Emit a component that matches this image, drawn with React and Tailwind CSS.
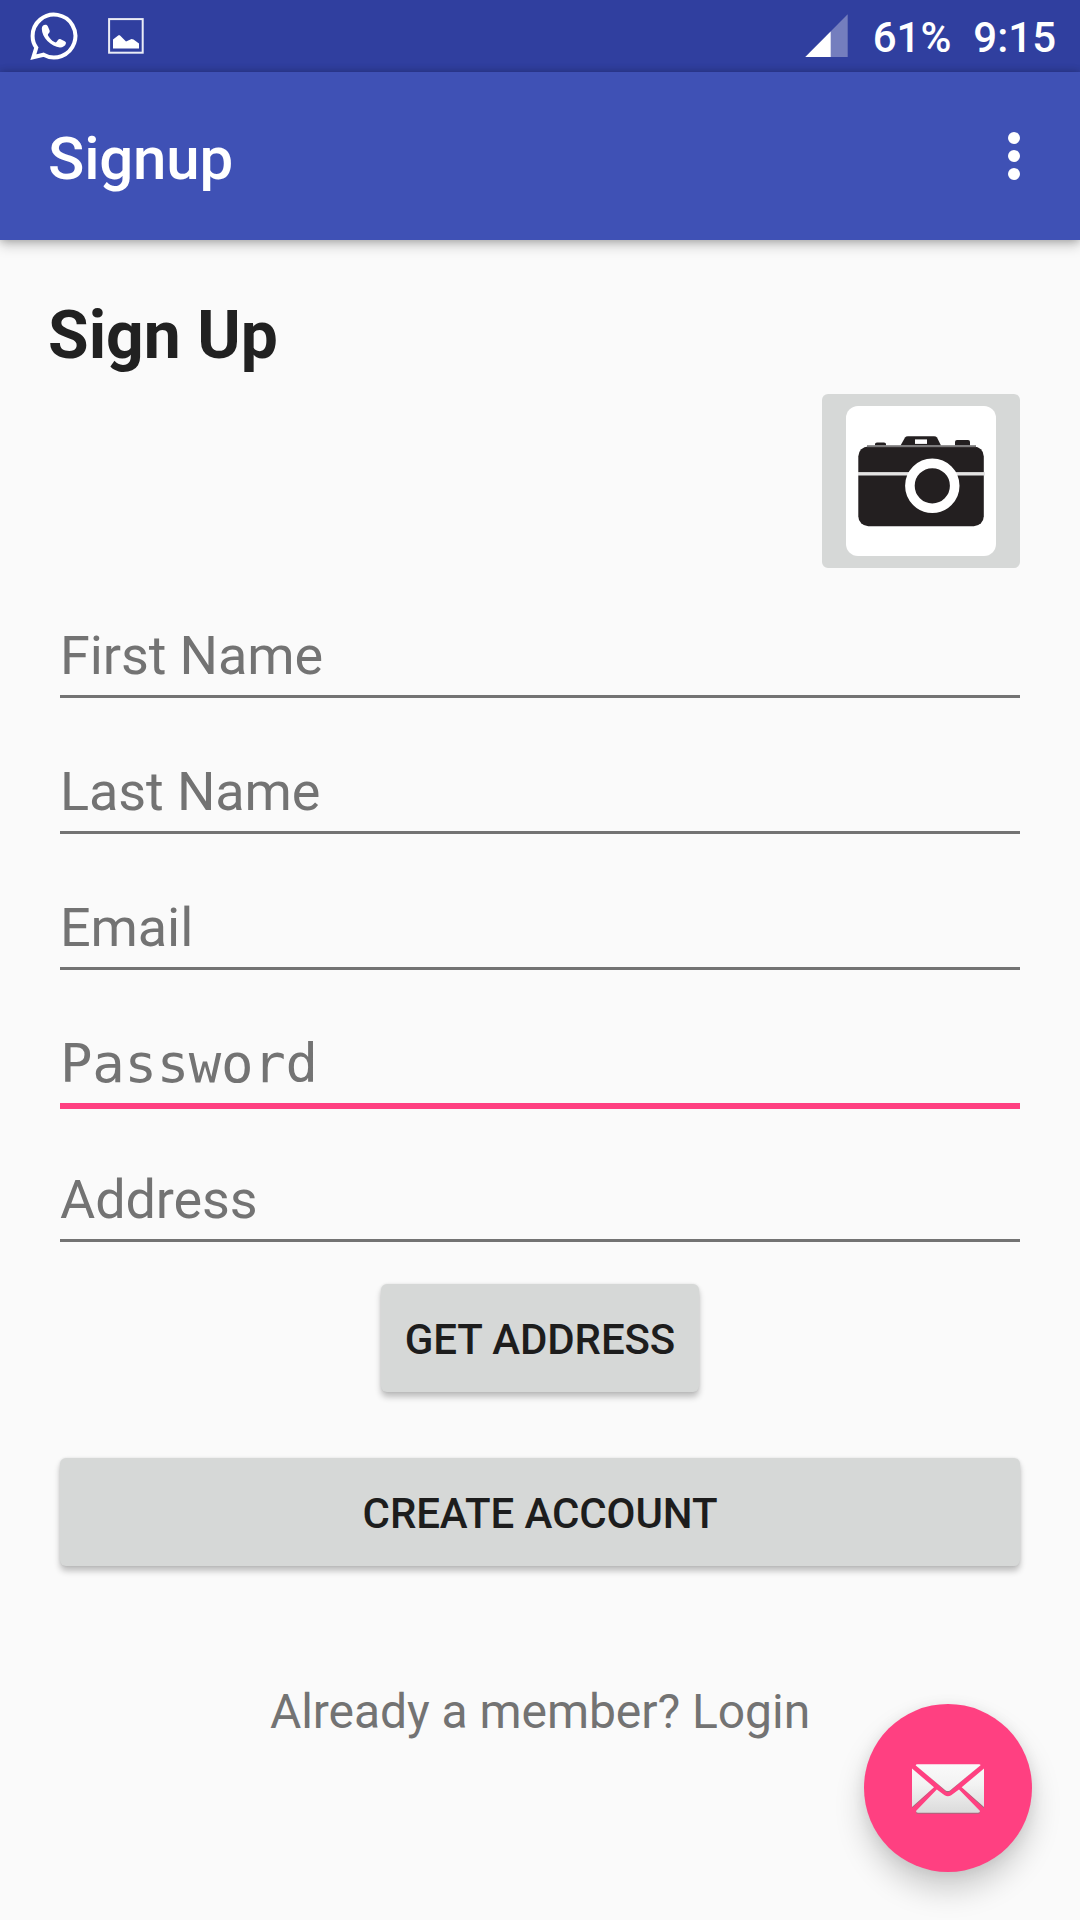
function WhatsAppIcon() {
  return (
    <svg className="h-[50px] w-[50px]" viewBox="0 0 50 50" fill="none">
      <path
        d="M4.3 46.3 L7.3 36.6 C4.9 33.4 3.6 29.4 3.6 25 A21.4 21.4 0 1 1 14.6 43.7 Z"
        stroke="#fff"
        strokeWidth="4"
      />
      <path
        d="M13.4 19 C13.4 16.6 15 15 17 15 C18.3 15 19 15.5 19.5 16.7 L21.1 20.5 C21.6 21.8 21.2 22.8 20.2 23.8 C19.3 24.7 19.3 25.2 19.9 26.2 C21.5 28.8 23.4 30.8 26.1 32.3 C27.1 32.9 27.6 32.8 28.3 31.9 L29.6 30.2 C30.4 29.2 31.2 29 32.3 29.5 L36.3 31.4 C37.4 31.9 37.7 32.5 37.5 33.7 C37 36.2 34.2 37.7 31.5 37.6 C27.3 37.4 22.8 35 19 31.2 C15.7 27.8 13.4 23.2 13.4 19 Z"
        fill="#fff"
        transform="translate(-.6 -1.2)"
      />
    </svg>
  );
}

function PictureIcon() {
  return (
    <svg className="h-9 w-9" viewBox="0 0 36 36" fill="none">
      <rect x="1.1" y="1.1" width="33.6" height="33.6" stroke="#fff" strokeOpacity=".9" strokeWidth="2" />
      <path d="M5 21.6 L10.5 17.3 L11.8 17.3 L18 23.4 L23.5 21 L25.5 21.5 L31 25.5 V30.6 H5 Z" fill="#fff" />
    </svg>
  );
}

function SignalIcon() {
  return (
    <svg className="h-[43px] w-[43px]" viewBox="0 0 43 43">
      <path d="M0.3 43 L42.7 0.3 V43 Z" fill="#fff" fillOpacity=".33" />
      <path d="M0.3 43 L25.7 17.5 V43 Z" fill="#fff" />
    </svg>
  );
}

function CameraIcon() {
  return (
    <svg className="h-[150px] w-[150px]" viewBox="0 0 150 150">
      <rect width="150" height="150" rx="12" fill="#fff" />
      <g transform="translate(0 .4)">
        <g fill="#231f20">
          <path d="M29 39 V37.5 Q29 36 31 36 H38 Q40 36 40 37.5 V39 Z" />
          <path d="M109 39 V35.5 Q109 33.5 111 33.5 H122 Q124 33.5 124 35.5 V39 Z" />
          <path d="M54.5 39 L59 31 Q60 29.8 62 29.8 H88 Q90 29.8 91 31 L95 39 Z" />
          <rect x="12.3" y="40" width="125.5" height="79.8" rx="10" />
        </g>
        <rect x="69" y="33" width="12" height="4.5" fill="#fff" />
        <rect x="21" y="38.8" width="109" height="2" fill="#7b797a" />
        <rect x="12" y="65.7" width="127" height="3.4" fill="#e4e3e3" />
        <circle cx="86.3" cy="79.4" r="22.4" fill="#231f20" stroke="#fff" strokeWidth="9.6" />
      </g>
    </svg>
  );
}

function MailIcon() {
  return (
    <svg className="h-[50px] w-[72px]" viewBox="0 0 72 50">
      <defs>
        <linearGradient id="paper" gradientUnits="userSpaceOnUse" x1="0" y1="0" x2="0" y2="50">
          <stop offset="0" stopColor="#fafafa" />
          <stop offset=".4" stopColor="#f3f3f3" />
          <stop offset="1" stopColor="#dadada" />
        </linearGradient>
      </defs>
      <g fill="#a3697b">
        <path d="M4.5 1.2 L33.5 27.2 Q35.8 29.2 38 27.2 L68 1.2 Z" />
        <path d="M4.5 47.5 Q3.5 49.8 6 49.8 H66 Q68.5 49.8 67.5 47.5 Z" />
        <path d="M0 42 L0 44 L22.5 23.8 Z" />
        <path d="M72 42 L72 44.2 L49.2 23.5 Z" />
      </g>
      <g fill="url(#paper)">
        <path d="M3.8 1.5 Q3.5 .2 5.5 .2 H67 Q69 .2 68.3 1.5 L38.3 26.2 Q35.8 28 33.3 26.2 Z" />
        <path d="M0 4.5 L22 23.3 L0 43 Z" />
        <path d="M72 4.5 L49.7 23.3 L72 43 Z" />
        <path d="M24.8 25.5 L32.6 31.2 Q35.8 33.3 39.2 31.2 L47 25.5 L68 47 Q68 48.7 66 48.7 H6 Q4 48.7 4 47 Z" />
      </g>
    </svg>
  );
}

function Field({ label, mono, focused }) {
  return (
    <div className="mt-6 flex h-28 flex-col px-3">
      <div
        className={
          mono
            ? "mt-[34px] h-[75px] shrink-0 font-['DejaVu_Sans_Mono',monospace] text-[54px] leading-[72px] tracking-[-0.3px] text-[#737373]"
            : "mt-[34px] h-[75px] shrink-0 text-[54px] leading-[71px] tracking-[-0.1px] text-[#737373]"
        }
      >
        {label}
      </div>
      <div className={focused ? "h-1.5 shrink-0 bg-[#ff4081]" : "h-[3px] shrink-0 bg-[#737373]"} />
    </div>
  );
}

const buttonClass =
  "flex h-[108px] items-center justify-center rounded-md bg-[#d6d8d7] pt-[4px] text-[42px] font-medium leading-[50px] tracking-[-0.1px] text-[#1d1d1d] shadow-[0_5px_6px_rgba(0,0,0,0.24),0_0_3px_rgba(0,0,0,0.1)]";

export default function App() {
  return (
    <div className="relative flex h-[1920px] w-[1080px] flex-col overflow-hidden bg-[#fafafa] font-['Roboto',sans-serif]">
      <div className="flex h-[72px] shrink-0 items-start justify-between bg-[#303f9f] pl-[29px] pr-6 text-white">
        <div className="flex pt-[11px]">
          <WhatsAppIcon />
          <div className="ml-[29px] pt-[7px]">
            <PictureIcon />
          </div>
        </div>
        <div className="flex items-start text-[42px] font-medium leading-[50px]">
          <div className="mr-[25px] pt-[14px]">
            <SignalIcon />
          </div>
          <span className="mr-[22px] mt-[13px]">61%</span>
          <span className="mt-[13px]">9:15</span>
        </div>
      </div>

      <header className="z-10 flex h-[168px] shrink-0 items-center justify-between bg-[#3f51b5] pl-12 pr-[60px] text-white shadow-[0_5px_12px_rgba(0,0,0,0.22),0_0_8px_rgba(0,0,0,0.22)]">
        <h1 className="pt-[5px] text-[60px] font-medium leading-[70px] tracking-[-0.2px]">Signup</h1>
        <div className="flex flex-col gap-1.5">
          <span className="h-3 w-3 rounded-full bg-white" />
          <span className="h-3 w-3 rounded-full bg-white" />
          <span className="h-3 w-3 rounded-full bg-white" />
        </div>
      </header>

      <main className="flex flex-col px-12 pt-[56px]">
        <h2 className="text-[66px] font-bold leading-[80px] text-[#212121]">Sign Up</h2>
        <div className="mr-3 mt-[18px] flex h-[174px] w-[198px] items-center justify-center self-end rounded-md bg-[#d6d8d7]">
          <CameraIcon />
        </div>
        <div className="-mt-[6px] flex flex-col">
          <Field label="First Name" />
          <Field label="Last Name" />
          <Field label="Email" />
          <Field label="Password" mono focused />
          <Field label="Address" />
        </div>
        <div className={`${buttonClass} mt-[42px] w-[318px] self-center`}>GET ADDRESS</div>
        <div className={`${buttonClass} mx-3 mt-[66px]`}>CREATE ACCOUNT</div>
        <p className="mt-[116px] text-center text-[48px] leading-[60px] tracking-[-0.05px] text-[#737373]">
          Already a member? Login
        </p>
      </main>

      <div className="absolute bottom-12 right-12 flex h-[168px] w-[168px] items-center justify-center rounded-full bg-[#ff4081] pt-[2px] shadow-[0_18px_30px_rgba(0,0,0,0.18),0_2px_14px_rgba(0,0,0,0.08)]">
        <MailIcon />
      </div>
    </div>
  );
}
